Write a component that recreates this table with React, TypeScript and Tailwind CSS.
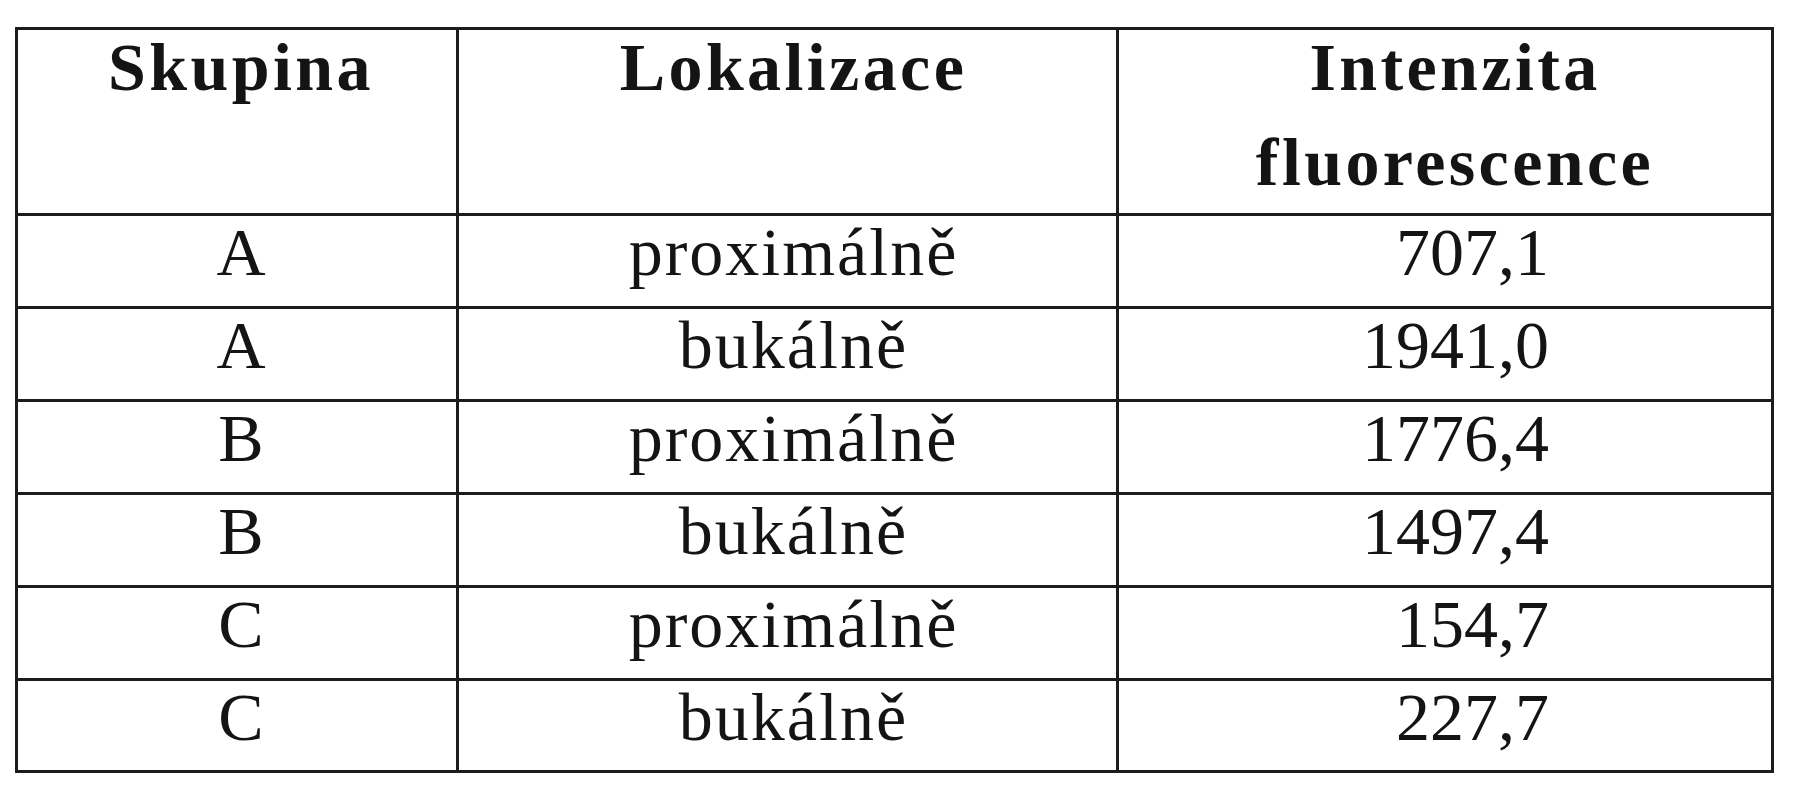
const rows = [
  { group: "A", place: "proximálně", value: "707,1" },
  { group: "A", place: "bukálně", value: "1941,0" },
  { group: "B", place: "proximálně", value: "1776,4" },
  { group: "B", place: "bukálně", value: "1497,4" },
  { group: "C", place: "proximálně", value: "154,7" },
  { group: "C", place: "bukálně", value: "227,7" },
];

export default function App() {
  return (
    <div className="w-[1805px] h-[800px] bg-white overflow-hidden font-['Liberation_Serif','Times_New_Roman',serif] text-[#141414]">
      <div className="ml-[15px] mt-[27px] w-[1759px] border-[3px] border-[#1c1c1c] flex flex-col">
        {/* header */}
        <div className="flex h-[186px] border-b-[3px] border-[#1c1c1c] font-bold text-[68px] tracking-[3.4px]">
          <div className="w-[441px] border-r-[3px] border-[#1c1c1c] text-center pl-[8px]">
            <div className="leading-[95px] -mt-[10px]">Skupina</div>
          </div>
          <div className="w-[660px] border-r-[3px] border-[#1c1c1c] text-center pl-[12px]">
            <div className="leading-[95px] -mt-[10px]">Lokalizace</div>
          </div>
          <div className="flex-1 text-center pl-[20px]">
            <div className="leading-[95px] -mt-[10px]">
              Intenzita
              <br />
              fluorescence
            </div>
          </div>
        </div>

        {rows.map((r, i) => (
          <div
            key={i}
            className={
              i < rows.length - 1
                ? "flex h-[93px] border-b-[3px] border-[#1c1c1c] text-[68px] leading-[72px]"
                : "flex h-[89px] text-[68px] leading-[72px]"
            }
          >
            <div className="w-[441px] border-r-[3px] border-[#1c1c1c] text-center pl-[8px]">{r.group}</div>
            <div className="w-[660px] border-r-[3px] border-[#1c1c1c] text-center pl-[12px] tracking-[2px]">{r.place}</div>
            <div className="flex-1 text-right pr-[222px]">{r.value}</div>
          </div>
        ))}
      </div>
    </div>
  );
}
